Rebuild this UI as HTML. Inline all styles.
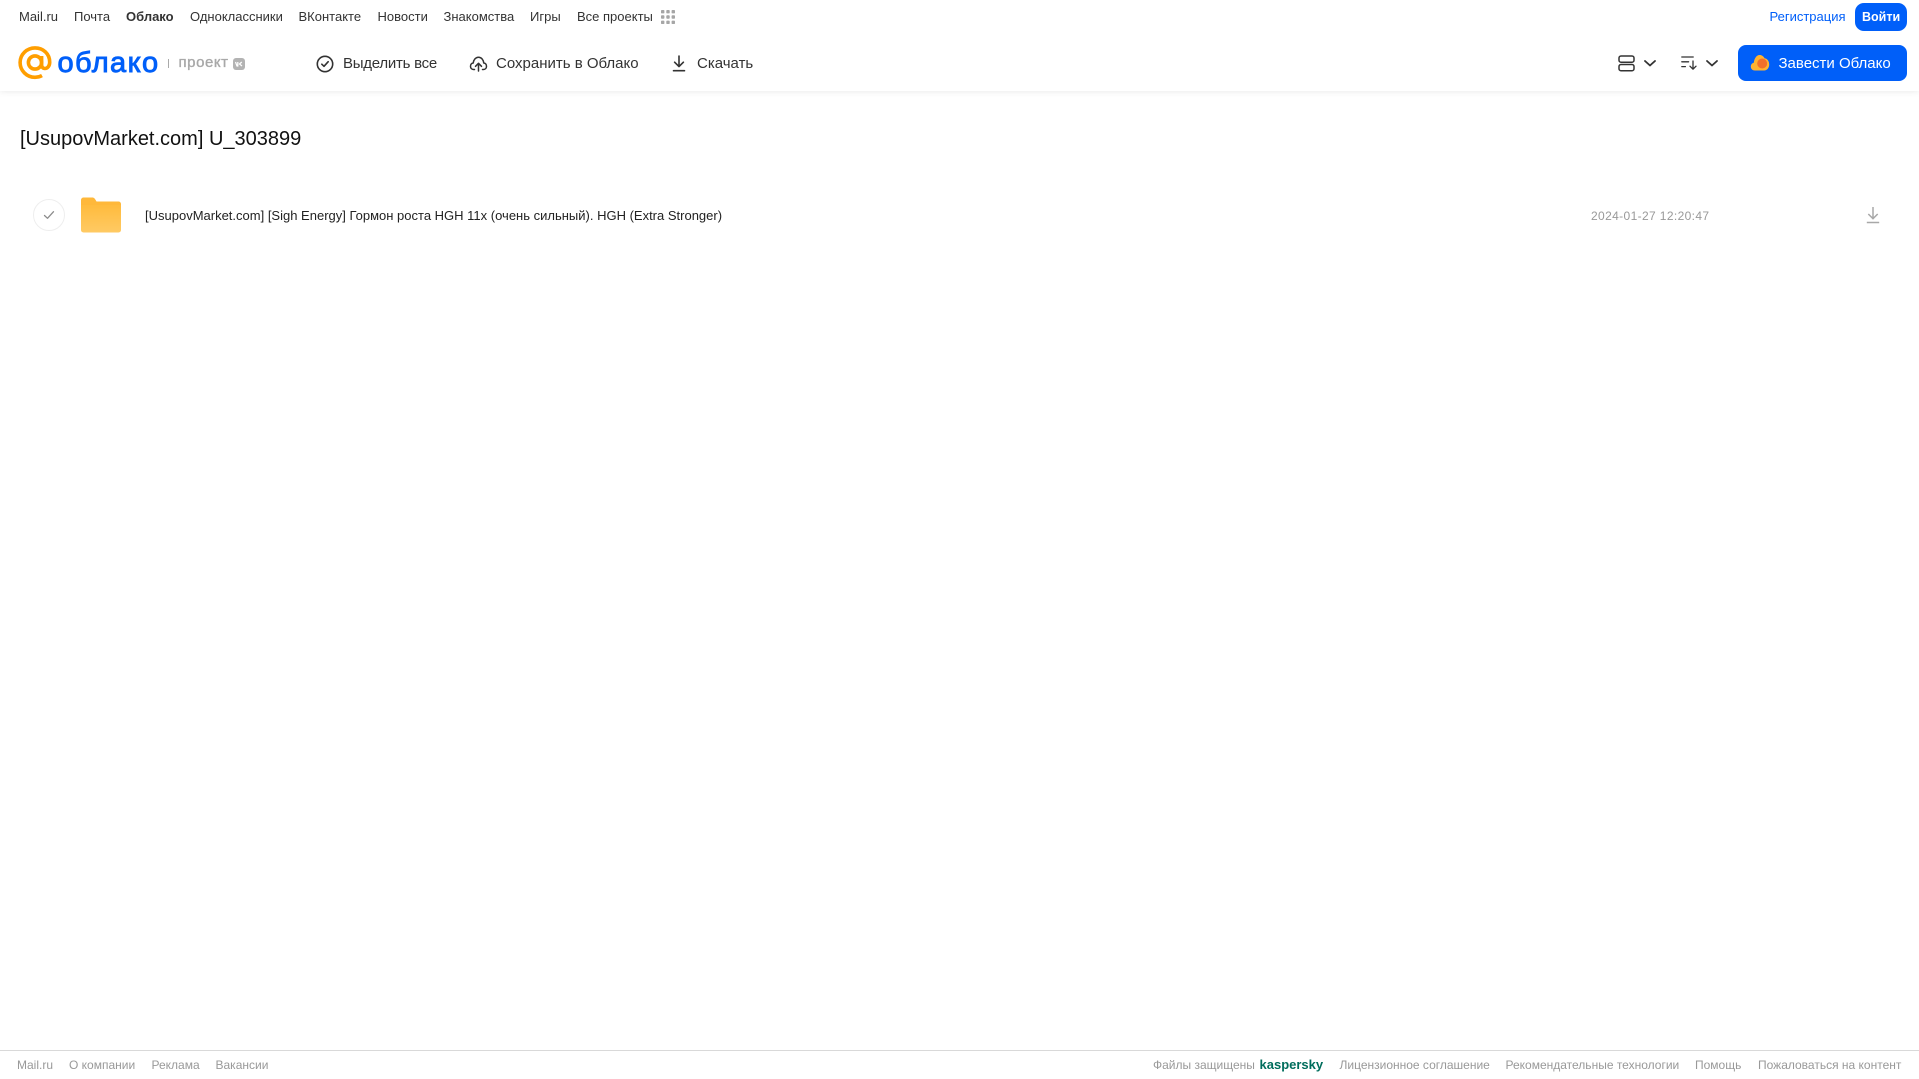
<!DOCTYPE html>
<html lang="ru">
<head>
<meta charset="utf-8">
<title>[UsupovMarket.com] U_303899</title>
<style>
html,body{margin:0;padding:0;background:#fff}
body{position:relative;width:1919px;height:1079px;overflow:hidden;font-family:"Liberation Sans","Noto Sans CJK SC",sans-serif}
.t{position:absolute;white-space:nowrap;line-height:20px;height:20px}
.n{top:7px;font-size:13px;color:#333}
.a{top:54px;font-size:15px;color:#333}
.f{top:1055px;font-size:12px;color:#999}
svg{position:absolute;display:block}
#hd{position:absolute;left:0;top:0;width:1919px;height:91px;background:#fff;box-shadow:0 1px 6px rgba(0,0,0,.08)}
</style>
</head>
<body>
<div id="hd"></div>

<span class="t n" style="left:19px">Mail.ru</span>
<span class="t n" style="left:74px">Почта</span>
<span class="t n" style="left:126px;font-weight:700">Облако</span>
<span class="t n" style="left:190px">Одноклассники</span>
<span class="t n" style="left:298.500px">ВКонтакте</span>
<span class="t n" style="left:377.500px">Новости</span>
<span class="t n" style="left:443.500px">Знакомства</span>
<span class="t n" style="left:530px">Игры</span>
<span class="t n" style="left:577px">Все проекты</span>
<svg style="left:661px;top:10px" width="14" height="14" viewBox="0 0 14 14" fill="#a6a6a6">
<rect x="0" y="0" width="3.4" height="3.4" rx=".8"/><rect x="5.3" y="0" width="3.4" height="3.4" rx=".8"/><rect x="10.6" y="0" width="3.4" height="3.4" rx=".8"/>
<rect x="0" y="5.3" width="3.4" height="3.4" rx=".8"/><rect x="5.3" y="5.3" width="3.4" height="3.4" rx=".8"/><rect x="10.6" y="5.3" width="3.4" height="3.4" rx=".8"/>
<rect x="0" y="10.6" width="3.4" height="3.4" rx=".8"/><rect x="5.3" y="10.6" width="3.4" height="3.4" rx=".8"/><rect x="10.6" y="10.6" width="3.4" height="3.4" rx=".8"/>
</svg>

<span class="t n" style="left:1769.500px;color:#005ff9">Регистрация</span>
<div style="position:absolute;left:1855px;top:3px;width:52px;height:28px;border-radius:9px;background:#005ff9"></div>
<span class="t n" style="left:1862px;color:#fff;font-weight:700;font-size:12.5px">Войти</span>

<!-- logo -->
<svg style="left:18px;top:46px" width="34" height="34" viewBox="0 0 34 34" fill="none" stroke="#ff9e00" stroke-width="3.6">
<circle cx="17" cy="16.5" r="6.6"/>
<path d="M23.6 10v8.500c0 2.600 1.400 4 3.200 4 2.300 0 4.900-2 4.900-6.400C31.700 7.800 25.300 1.900 17 1.900 8.800 1.900 2.100 8.400 2.100 16.500s6.500 14.800 14.900 14.800c2.700 0 5-.6 7-1.700"/>
</svg>
<span class="t" style="left:57.500px;top:47px;height:32px;line-height:32px;font-size:29px;color:#005ff9;letter-spacing:1.4px;-webkit-text-stroke:.9px #005ff9">облако</span>
<div style="position:absolute;left:168px;top:59px;width:1px;height:9px;background:#aaa"></div>
<span class="t" style="left:178.500px;top:53px;font-size:15px;color:#a8a8a8;letter-spacing:.55px;-webkit-text-stroke:.35px #a8a8a8">проект</span>
<div style="position:absolute;left:233px;top:58px;width:12px;height:12px;border-radius:3px;background:#b3b3b3"></div>
<svg style="left:233px;top:58px" width="12" height="12" viewBox="0 0 12 12" fill="none" stroke="#fff" stroke-width="1.2"><path d="M2.500 4l1.500 4h.8V4M8.800 4 6.500 6l2.500 2"/></svg>

<!-- actions -->
<svg style="left:316px;top:55px" width="18" height="18" viewBox="0 0 18 18" fill="none" stroke="#333" stroke-width="1.600"><circle cx="9" cy="9" r="7.700"/><path d="M5.800 9.200 8 11.300l4.200-4.600" stroke-linecap="round" stroke-linejoin="round"/></svg>
<span class="t a" style="left:343px;letter-spacing:-.25px">Выделить все</span>

<svg style="left:469px;top:56px" width="19" height="16" viewBox="0 0 19 16" fill="none" stroke="#333" stroke-width="1.500" stroke-linecap="round" stroke-linejoin="round"><path d="M5.500 13.500H4.500C2.700 13.500 1.500 12.100 1.500 10.200c0-1.700 1.100-3 2.700-3.200C4.600 3.700 6.700 1.200 9.500 1.200s4.900 2.400 5.300 5.800c1.600.2 2.700 1.500 2.700 3.200 0 1.900-1.200 3.300-3 3.300h-1"/><path d="M9.500 15V7.500M6.500 10.300l3-3 3 3"/></svg>
<span class="t a" style="left:496px">Сохранить в Облако</span>

<svg style="left:672px;top:55px" width="14" height="17" viewBox="0 0 14 17" fill="none" stroke="#333" stroke-width="1.600" stroke-linecap="round" stroke-linejoin="round"><path d="M7 1v10.500M2.600 7.200 7 11.600l4.400-4.400M1.500 15.700h11"/></svg>
<span class="t a" style="left:697px">Скачать</span>

<svg style="left:1618px;top:55px" width="17" height="17" viewBox="0 0 17 17" fill="none" stroke="#333" stroke-width="1.500"><rect x="1" y="1" width="15" height="6.200" rx="2"/><rect x="1" y="9.500" width="15" height="6.200" rx="2"/></svg>
<svg style="left:1643px;top:59px" width="14" height="9" viewBox="0 0 14 9" fill="none" stroke="#333" stroke-width="1.800" stroke-linecap="round" stroke-linejoin="round"><path d="M2 2l5 4.500L12 2"/></svg>
<svg style="left:1681px;top:56px" width="17" height="14" viewBox="0 0 17 14" fill="none" stroke="#333" stroke-width="1.300" stroke-linecap="round" stroke-linejoin="round"><path d="M.8 1h11.400M.8 5.800h6.800M.8 10.600h3.600M12 5v8M9 10.200l3 3 3-3"/></svg>
<svg style="left:1705px;top:59px" width="14" height="9" viewBox="0 0 14 9" fill="none" stroke="#333" stroke-width="1.800" stroke-linecap="round" stroke-linejoin="round"><path d="M2 2l5 4.500L12 2"/></svg>

<div style="position:absolute;left:1738px;top:45px;width:169px;height:36px;border-radius:8px;background:#005ff9"></div>
<svg style="left:1750px;top:54px" width="20" height="17" viewBox="0 0 20 17"><path fill="#ffb330" d="M5 16.500C2.400 16.500.8 14.800.8 12.500c0-2 1.300-3.500 3-3.800C4.300 4.400 6.600 1 9.500 1c2.300 0 4 1.200 5 3.300 2.800.3 4.700 3 4.700 6.200 0 3.400-2.200 6-5 6z"/><circle cx="12.200" cy="9.500" r="5" fill="#f2702a"/></svg>
<span class="t a" style="left:1778.500px;color:#fff">Завести Облако</span>

<!-- heading -->
<span class="t" style="left:20px;top:125px;height:28px;line-height:28px;font-size:20px;color:#111">[UsupovMarket.com] U_303899</span>

<!-- row -->
<div style="position:absolute;left:33px;top:199px;width:30px;height:30px;border:1px solid #eee;border-radius:50%"></div>
<svg style="left:43px;top:210px" width="12" height="10" viewBox="0 0 12 10" fill="none" stroke="#8c8c8c" stroke-width="1.300" stroke-linecap="round" stroke-linejoin="round"><path d="M1.500 5.500 4.500 8.300 10.500 1.700"/></svg>
<svg style="left:81px;top:197px" width="40" height="36" viewBox="0 0 40 36">
<defs><linearGradient id="g" x1="0" y1="0" x2="0" y2="1"><stop offset="0" stop-color="#ffbb3d"/><stop offset="1" stop-color="#ffca64"/></linearGradient></defs>
<path fill="#ffb83a" d="M0 3a2.500 2.500 0 0 1 2.500-2.500H11c2 0 2.700 1 3.500 2.300L15.500 4.500H37.500A2.500 2.500 0 0 1 40 7V12H0z"/>
<path fill="url(#g)" d="M0 8h40v25a2.500 2.500 0 0 1-2.500 2.500H2.500A2.500 2.500 0 0 1 0 33z"/>
</svg>
<span class="t" style="left:145px;top:206px;font-size:13px;color:#222">[UsupovMarket.com] [Sigh Energy] Гормон роста HGH 11x (очень сильный). HGH (Extra Stronger)</span>
<span class="t" style="left:1591px;top:206px;font-size:12px;color:#999;letter-spacing:.37px">2024-01-27 12:20:47</span>
<svg style="left:1866px;top:206px" width="14" height="18" viewBox="0 0 14 18" fill="none" stroke="#a8a8a8" stroke-width="1.500"><path d="M7 1v11.500M2.300 8 7 12.700 11.700 8M.8 16.500h12.400"/></svg>

<!-- footer -->
<div style="position:absolute;left:0;top:1050px;width:1919px;height:1px;background:#d9d9d9"></div>
<span class="t f" style="left:17px">Mail.ru</span>
<span class="t f" style="left:69px">О компании</span>
<span class="t f" style="left:151.500px">Реклама</span>
<span class="t f" style="left:215.500px">Вакансии</span>
<span class="t f" style="left:1153px">Файлы защищены</span>
<span class="t f" style="left:1259.500px;font-size:13px;font-weight:700;color:#006d5c">kaspersky</span>
<span class="t f" style="left:1339.500px">Лицензионное соглашение</span>
<span class="t f" style="left:1505.500px">Рекомендательные технологии</span>
<span class="t f" style="left:1695px">Помощь</span>
<span class="t f" style="left:1758px">Пожаловаться на контент</span>
</body>
</html>
